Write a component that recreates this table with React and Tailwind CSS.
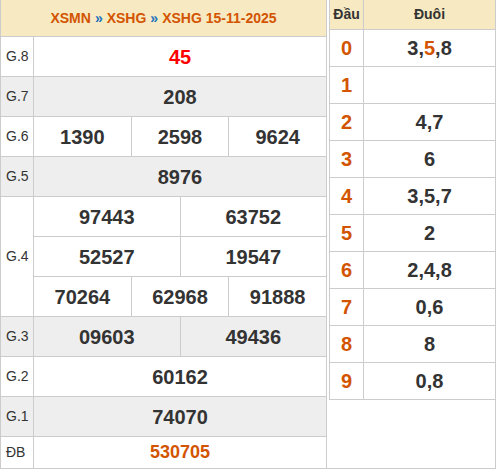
import React from "react";

const rows = [
  { label: "G.8", groups: [["45"]], kind: "red" },
  { label: "G.7", groups: [["208"]], gray: true },
  { label: "G.6", groups: [["1390", "2598", "9624"]] },
  { label: "G.5", groups: [["8976"]], gray: true },
  {
    label: "G.4",
    groups: [
      ["97443", "63752"],
      ["52527", "19547"],
      ["70264", "62968", "91888"],
    ],
  },
  { label: "G.3", groups: [["09603", "49436"]], gray: true },
  { label: "G.2", groups: [["60162"]] },
  { label: "G.1", groups: [["74070"]], gray: true },
];

const loto = [
  { d: "0", t: [["3"], ["5", true], ["8"]] },
  { d: "1", t: [] },
  { d: "2", t: [["4"], ["7"]] },
  { d: "3", t: [["6"]] },
  { d: "4", t: [["3"], ["5"], ["7"]] },
  { d: "5", t: [["2"]] },
  { d: "6", t: [["2"], ["4"], ["8"]] },
  { d: "7", t: [["0"], ["6"]] },
  { d: "8", t: [["8"]] },
  { d: "9", t: [["0"], ["8"]] },
];

const ResultRow = ({ row }) => {
  const bg = row.gray ? "bg-[#eeeeee]" : "bg-white";
  return (
    <div className={`flex shrink-0 border-b border-[#cccccc] ${bg}`}>
      <div className="w-[33px] shrink-0 border-r border-[#cccccc] flex items-center pl-[5px] text-[14px] text-[#333333]">
        {row.label}
      </div>
      <div className="flex-1 flex flex-col">
        {row.groups.map((g, gi) => (
          <div
            key={gi}
            className={`flex ${gi < row.groups.length - 1 ? "h-[40px] border-b border-[#cccccc]" : "h-[39px]"}`}
          >
            {g.map((n, ni) => (
              <div
                key={ni}
                className={`flex-1 flex items-center justify-center font-bold text-[20px] ${
                  ni > 0 ? "border-l border-[#cccccc]" : ""
                } ${row.kind === "red" ? "text-[#ff0000]" : "text-[#333333]"}`}
              >
                {n}
              </div>
            ))}
          </div>
        ))}
      </div>
    </div>
  );
};

export default function App() {
  return (
    <div
      className="w-[496px] h-[469px] flex bg-white"
      style={{ fontFamily: '"Liberation Sans", Arial, sans-serif' }}
    >
      {/* Result table */}
      <div className="w-[327px] shrink-0 border-l border-r border-[#cccccc] flex flex-col">
        <div className="h-[37px] shrink-0 bg-[#f7e9c1] border-b border-[#cccccc] flex items-center justify-center text-[14px] font-bold text-[#d35400]">
          XSMN <span className="text-[#1e73be] mx-[4px]">»</span> XSHG{" "}
          <span className="text-[#1e73be] mx-[4px]">»</span> XSHG 15-11-2025
        </div>
        {rows.map((r) => (
          <ResultRow key={r.label} row={r} />
        ))}
        <div className="flex h-[32px] shrink-0 border-b border-[#cccccc] bg-white">
          <div className="w-[33px] shrink-0 border-r border-[#cccccc] flex items-center pl-[5px] text-[14px] text-[#333333]">
            ĐB
          </div>
          <div className="flex-1 flex items-center justify-center font-bold text-[18px] text-[#d35400]">
            530705
          </div>
        </div>
      </div>

      {/* Loto table */}
      <div className="flex-1 border-r border-b border-[#cccccc] pl-[2px]">
        <div className="border-l border-[#cccccc]">
          <div className="flex h-[30px] bg-[#f7e9c1] border-b border-[#cccccc] text-[14px] font-bold text-[#333333]">
            <div className="w-[34px] border-r border-[#cccccc] flex items-center justify-center">Đầu</div>
            <div className="flex-1 flex items-center justify-center">Đuôi</div>
          </div>
          {loto.map((r) => (
            <div key={r.d} className="flex h-[37px] border-b border-[#cccccc] text-[20px] font-bold">
              <div className="w-[34px] border-r border-[#cccccc] flex items-center justify-center text-[#d35400]">
                {r.d}
              </div>
              <div className="flex-1 flex items-center justify-center text-[#333333]">
                {r.t.map(([v, hot], i) => (
                  <React.Fragment key={i}>
                    {i > 0 && ","}
                    <span className={hot ? "text-[#d35400]" : ""}>{v}</span>
                  </React.Fragment>
                ))}
              </div>
            </div>
          ))}
        </div>
      </div>
    </div>
  );
}
